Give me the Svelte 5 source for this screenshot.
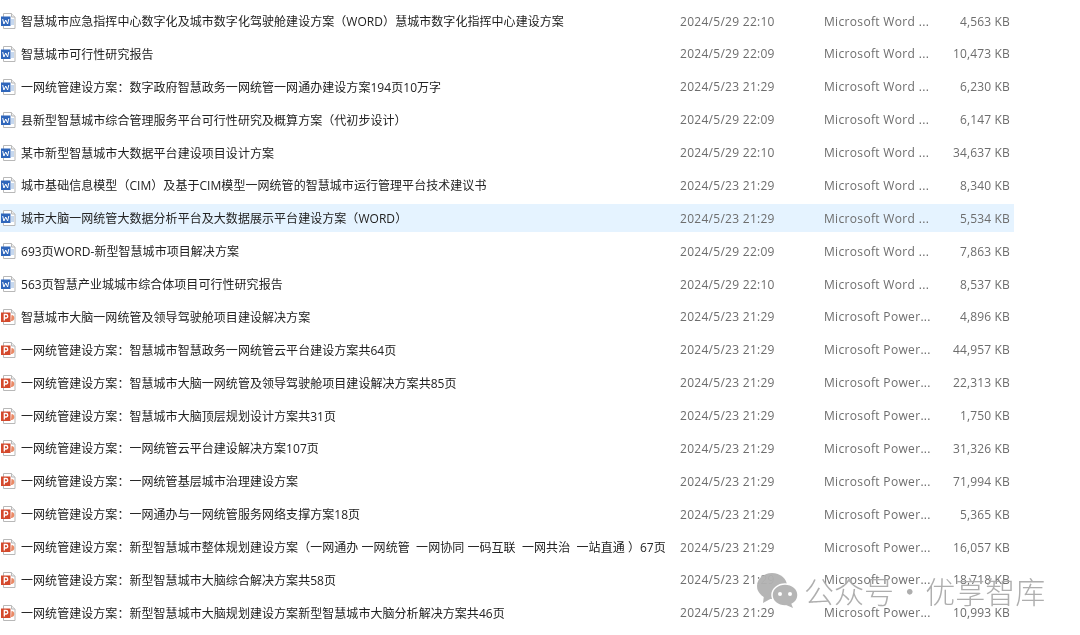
<script>
  const W = "Microsoft Word ...";
  const P = "Microsoft Power...";
  const files = [
    ["w", "智慧城市应急指挥中心数字化及城市数字化驾驶舱建设方案（WORD）慧城市数字化指挥中心建设方案", "2024/5/29 22:10", W, "4,563 KB"],
    ["w", "智慧城市可行性研究报告", "2024/5/29 22:09", W, "10,473 KB"],
    ["w", "一网统管建设方案：数字政府智慧政务一网统管一网通办建设方案194页10万字", "2024/5/23 21:29", W, "6,230 KB"],
    ["w", "县新型智慧城市综合管理服务平台可行性研究及概算方案（代初步设计）", "2024/5/29 22:09", W, "6,147 KB"],
    ["w", "某市新型智慧城市大数据平台建设项目设计方案", "2024/5/29 22:10", W, "34,637 KB"],
    ["w", "城市基础信息模型（CIM）及基于CIM模型一网统管的智慧城市运行管理平台技术建议书", "2024/5/23 21:29", W, "8,340 KB"],
    ["w", "城市大脑一网统管大数据分析平台及大数据展示平台建设方案（WORD）", "2024/5/23 21:29", W, "5,534 KB"],
    ["w", "693页WORD-新型智慧城市项目解决方案", "2024/5/29 22:09", W, "7,863 KB"],
    ["w", "563页智慧产业城城市综合体项目可行性研究报告", "2024/5/29 22:10", W, "8,537 KB"],
    ["p", "智慧城市大脑一网统管及领导驾驶舱项目建设解决方案", "2024/5/23 21:29", P, "4,896 KB"],
    ["p", "一网统管建设方案：智慧城市智慧政务一网统管云平台建设方案共64页", "2024/5/23 21:29", P, "44,957 KB"],
    ["p", "一网统管建设方案：智慧城市大脑一网统管及领导驾驶舱项目建设解决方案共85页", "2024/5/23 21:29", P, "22,313 KB"],
    ["p", "一网统管建设方案：智慧城市大脑顶层规划设计方案共31页", "2024/5/23 21:29", P, "1,750 KB"],
    ["p", "一网统管建设方案：一网统管云平台建设解决方案107页", "2024/5/23 21:29", P, "31,326 KB"],
    ["p", "一网统管建设方案：一网统管基层城市治理建设方案", "2024/5/23 21:29", P, "71,994 KB"],
    ["p", "一网统管建设方案：一网通办与一网统管服务网络支撑方案18页", "2024/5/23 21:29", P, "5,365 KB"],
    ["p", "一网统管建设方案：新型智慧城市整体规划建设方案（一网通办 一网统管  一网协同 一码互联  一网共治  一站直通 ）67页", "2024/5/23 21:29", P, "16,057 KB"],
    ["p", "一网统管建设方案：新型智慧城市大脑综合解决方案共58页", "2024/5/23 21:29", P, "18,718 KB"],
    ["p", "一网统管建设方案：新型智慧城市大脑规划建设方案新型智慧城市大脑分析解决方案共46页", "2024/5/23 21:29", P, "10,993 KB"]
  ];
</script>

<div class="list">
  {#each files as f, i}
    <div class="row" class:selected={i === 6}>
      <svg class="icon" width="16" height="16" viewBox="0 0 16 16">
        <path d="M2.500 .5h8l3.500 3.500v11.500h-11.500z" fill="#fff" stroke="#b8b8b8" />
        <path d="M10.500 .5v3.500h3.500" fill="#eee" stroke="#b8b8b8" />
        {#if f[0] === "w"}
          <path d="M10 7h3M10 9h3M10 11h3" stroke="#8db0dd" />
          <rect x="0" y="3.500" width="9.500" height="9.500" fill="#2f66bb" />
          <path d="M1.700 6l1.200 5 1.850-4 1.850 4 1.200-5" fill="none" stroke="#fff" stroke-width="1" />
        {:else}
          <path d="M10.500 6a3 3 0 1 1-.5 6z" fill="#ea8a66" />
          <rect x="0" y="3.500" width="9.500" height="9.500" fill="#d4492c" />
          <path d="M3.300 11.500v-6h1.700a1.600 1.600 0 0 1 0 3.500h-1.700" fill="none" stroke="#fff" stroke-width="1.300" />
        {/if}
      </svg>
      <span class="name">{f[1]}</span>
      <span class="date">{f[2]}</span>
      <span class="type">{f[3]}</span>
      <span class="size">{f[4]}</span>
    </div>
  {/each}

  <div class="mark">
    <svg width="41" height="35" viewBox="0 0 41 35">
      <ellipse cx="15" cy="13" rx="15" ry="13" fill="#b2b2b2" />
      <path d="M7 22l-1 8 9-5z" fill="#b2b2b2" />
      <ellipse cx="28" cy="22" rx="13" ry="11" fill="#b2b2b2" stroke="#fff" stroke-width="1.500" />
      <path d="M34 30l2 5-7-3z" fill="#b2b2b2" />
      <circle cx="23" cy="21" r="2" fill="#fff" />
      <circle cx="33" cy="21" r="2" fill="#fff" />
    </svg>
    <span>公众号 · 优享智库</span>
  </div>
</div>

<style>
  :global(body) {
    margin: 0;
    background: #fff;
  }

  .list {
    position: relative;
    width: 1080px;
    height: 635px;
    overflow: hidden;
    padding-top: 7px;
    box-sizing: border-box;
    display: flex;
    flex-direction: column;
    gap: 4.89px;
    font-family: "Open Sans", "Noto Sans CJK SC", sans-serif;
    font-size: 12px;
    filter: blur(0.3px);
  }

  .row {
    flex: none;
    width: 1014px;
    height: 28px;
    display: grid;
    grid-template-columns: 21px 659px 144px 140px 46px;
    align-items: center;
    white-space: nowrap;
  }

  .row.selected {
    background: #e5f3ff;
  }

  .icon {
    margin-left: 1px;
  }

  .name {
    color: #222;
    letter-spacing: 0.05px;
    white-space: pre;
  }

  .date,
  .type,
  .size {
    color: #6d6d6d;
    letter-spacing: 0.15px;
  }

  .date {
    letter-spacing: 0.28px;
  }

  .type {
    grid-column: 4;
    grid-row: 1;
    letter-spacing: 0.33px;
  }

  .size {
    justify-self: end;
    grid-column: 4 / 6;
    grid-row: 1;
  }

  .mark {
    position: absolute;
    left: 757px;
    top: 568px;
    display: flex;
    align-items: center;
    gap: 6px;
    color: #aaa;
    font-family: "Noto Sans CJK SC", sans-serif;
    font-size: 30px;
    font-weight: 300;
    word-spacing: -6px;
    opacity: 0.95;
    white-space: nowrap;
  }
</style>
